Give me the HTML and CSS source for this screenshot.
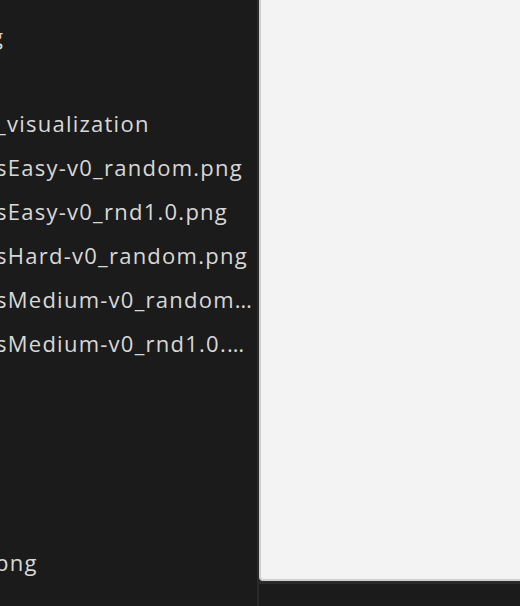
FILE: index.html
```html
<!DOCTYPE html>
<html>
<head>
<meta charset="utf-8">
<link rel="stylesheet" href="styles.css">
</head>
<body>
<div class="app">
  <div class="explorer">
    <div class="title">g</div>
    <ul class="tree">
      <li class="row">_visualization</li>
      <li class="row">sEasy-v0_random.png</li>
      <li class="row">sEasy-v0_rnd1.0.png</li>
      <li class="row">sHard-v0_random.png</li>
      <li class="row">sMedium-v0_random.png</li>
      <li class="row">sMedium-v0_rnd1.0.png</li>
    </ul>
    <ul class="tree tree-bottom">
      <li class="row row-png">png</li>
    </ul>
  </div>
  <div class="side">
    <div class="panel"></div>
    <div class="strip"></div>
  </div>
</div>
</body>
</html>
```
FILE: styles.css
```css
html, body {
  margin: 0;
  padding: 0;
  background: #1b1b1b;
}
.app {
  display: flex;
  width: 520px;
  height: 606px;
  overflow: hidden;
}
.explorer {
  width: 257px;
  flex: none;
  overflow: hidden;
  padding-top: 12px;
  box-sizing: border-box;
  font-family: "Open Sans", "Noto Sans", sans-serif;
  font-size: 22px;
  letter-spacing: 1.25px;
  color: #d8d8d8;
}
.title {
  line-height: 44px;
  height: 44px;
  margin-top: 2px;
  margin-left: -9px;
}
.tree {
  list-style: none;
  margin: 43px 0 0 0;
  padding: 0;
}
.row {
  line-height: 44px;
  height: 44px;
  margin-left: -4px;
  white-space: nowrap;
  overflow: hidden;
  text-overflow: ellipsis;
}
.tree-bottom {
  margin-top: 175px;
}
.row-png {
  margin-left: -5px;
}
.side {
  flex: 1;
  display: flex;
  flex-direction: column;
  border-left: 2px solid #2b2b2b;
}
.panel {
  height: 581px;
  flex: none;
  box-sizing: border-box;
  background: #f3f3f3;
  border-left: 2px solid #cfcfcf;
  border-bottom: 2px solid #cfcfcf;
  border-bottom-left-radius: 4px;
}
.strip {
  flex: 1;
  border-top: 3px solid #2b2b2b;
  background: #1b1b1b;
}
```
